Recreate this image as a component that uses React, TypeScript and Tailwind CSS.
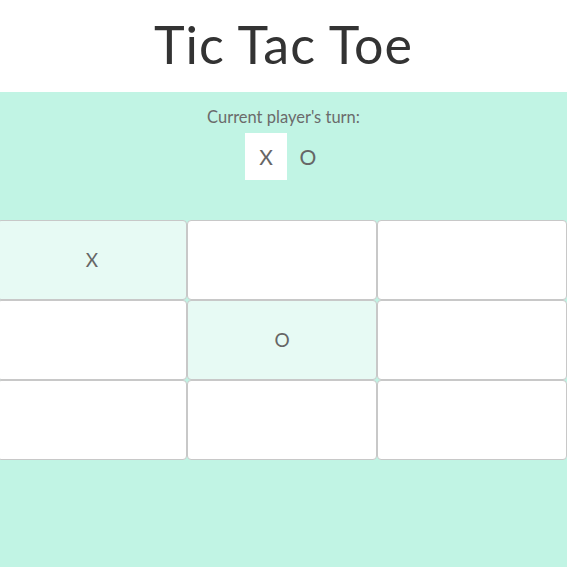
import React from 'react';

const board = ['X', '', '', '', 'O', '', '', '', ''];

const App = () => {
  return (
    <div className="flex min-h-screen flex-col overflow-hidden bg-white" style={{ fontFamily: 'Lato, "Open Sans", sans-serif' }}>
      {/* Titre */}
      <header className="flex h-[92px] items-center justify-center pb-[4px]">
        <h1 className="text-[52px] font-normal leading-none tracking-[1px] text-[#333]">Tic Tac Toe</h1>
      </header>
      <main className="flex flex-1 flex-col bg-[#c1f4e4]">
        <div className="flex flex-col items-center pt-[15px]">
          <p className="text-[16.5px] leading-5 text-[#6b6b6b]">Current player's turn:</p>
          <div className="ml-[7px] mt-[6px] flex items-center">
            <span className="flex h-[47px] w-[42px] items-center justify-center bg-white text-[21px] text-[#666]">X</span>
            <span className="flex h-[47px] w-[42px] items-center justify-center text-[21px] text-[#666]">O</span>
          </div>
        </div>
        {/* Plateau */}
        <div className="ml-[-3px] mt-[40px] grid w-[570px] grid-cols-3">
          {board.map((v, i) => (
            <div
              key={i}
              className={
                v
                  ? 'flex h-[80px] items-center justify-center rounded-[4px] border border-[#c8c8c8] bg-[#e7faf4] text-[19px] text-[#666]'
                  : 'flex h-[80px] items-center justify-center rounded-[4px] border border-[#c8c8c8] bg-white text-[19px] text-[#666]'
              }
            >
              {v}
            </div>
          ))}
        </div>
      </main>
    </div>
  );
};

export default App;
